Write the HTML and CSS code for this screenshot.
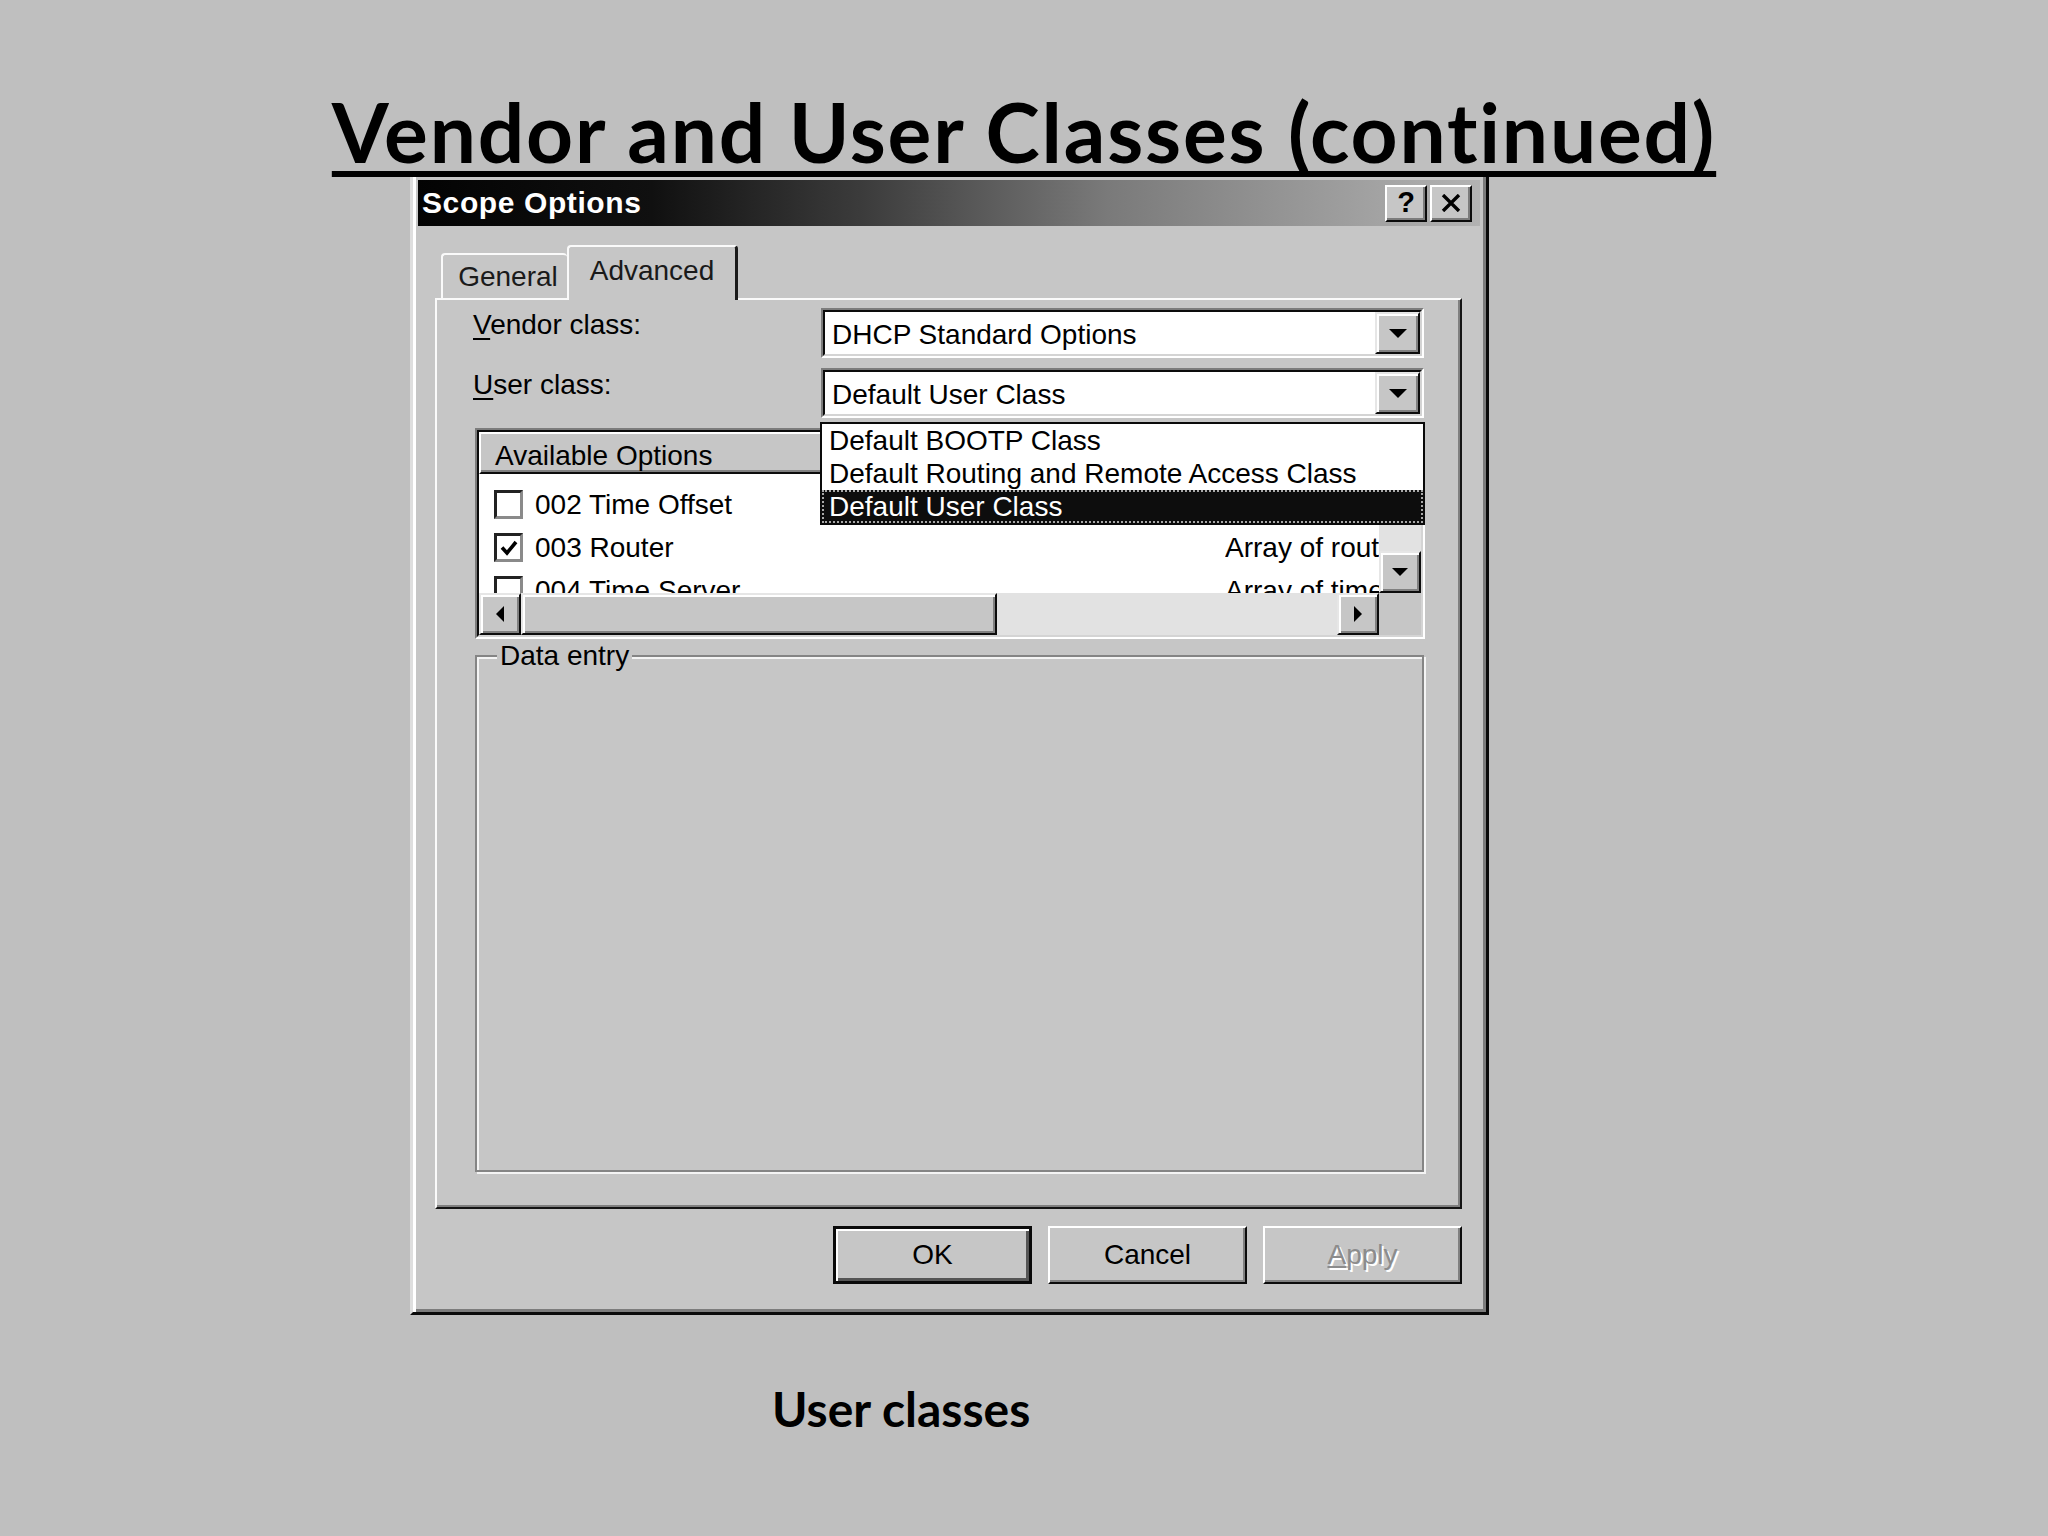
FILE: index.html
```html
<!DOCTYPE html>
<html lang="en">
<head>
<meta charset="utf-8">
<title>Vendor and User Classes (continued)</title>
<link rel="stylesheet" href="styles.css">
</head>
<body>
<div class="slide">
  <h1 class="title">Vendor and User Classes (continued)</h1>

  <div class="dialog">
    <div class="titlebar">
      <span class="tb-text">Scope Options</span>
      <div class="tb-btns">
        <span class="tb-btn tb-help">?</span>
        <span class="tb-btn">
          <svg width="20" height="18" viewBox="0 0 20 18"><path d="M2 1 L18 17 M18 1 L2 17" stroke="#000" stroke-width="3.4" fill="none"/></svg>
        </span>
      </div>
    </div>

    <div class="tabs">
      <div class="tab">General</div>
      <div class="tab active">Advanced</div>
    </div>

    <div class="panel">
      <div class="field-row">
        <label class="field-label"><u>V</u>endor class:</label>
        <div class="combo">
          <div class="combo-inner">
            <span class="combo-text">DHCP Standard Options</span>
            <span class="combo-btn">
              <svg width="18" height="9" viewBox="0 0 18 9"><path d="M0 0 H18 L9 9 Z" fill="#000"/></svg>
            </span>
          </div>
        </div>
      </div>

      <div class="field-row">
        <label class="field-label"><u>U</u>ser class:</label>
        <div class="combo">
          <div class="combo-inner">
            <span class="combo-text">Default User Class</span>
            <span class="combo-btn">
              <svg width="18" height="9" viewBox="0 0 18 9"><path d="M0 0 H18 L9 9 Z" fill="#000"/></svg>
            </span>
          </div>
          <ul class="dropdown">
            <li class="dd-item">Default BOOTP Class</li>
            <li class="dd-item">Default Routing and Remote Access Class</li>
            <li class="dd-item selected">Default User Class</li>
          </ul>
        </div>
      </div>

      <div class="listview">
        <div class="lv-inner">
          <div class="lv-content">
            <div class="lv-header">
              <div class="lv-hcell">Available Options</div>
            </div>
            <div class="lv-row">
              <div class="lv-c1"><span class="checkbox"></span>002 Time Offset</div>
              <div class="lv-c2"></div>
            </div>
            <div class="lv-row">
              <div class="lv-c1"><span class="checkbox">
                <svg width="20" height="20" viewBox="0 0 20 20"><path d="M3 9.5 L8 15 L17 4" stroke="#000" stroke-width="3.6" fill="none"/></svg>
              </span>003 Router</div>
              <div class="lv-c2">Array of router addresses</div>
            </div>
            <div class="lv-row">
              <div class="lv-c1"><span class="checkbox"></span>004 Time Server</div>
              <div class="lv-c2">Array of time server addresses</div>
            </div>
          </div>
          <div class="vscroll">
            <span class="sb-btn">
              <svg width="16" height="8" viewBox="0 0 16 8"><path d="M0 8 H16 L8 0 Z" fill="#000"/></svg>
            </span>
            <span class="sb-track"></span>
            <span class="sb-btn">
              <svg width="16" height="8" viewBox="0 0 16 8"><path d="M0 0 H16 L8 8 Z" fill="#000"/></svg>
            </span>
          </div>
          <div class="hscroll">
            <span class="sb-btn">
              <svg width="8" height="16" viewBox="0 0 8 16"><path d="M8 0 V16 L0 8 Z" fill="#000"/></svg>
            </span>
            <span class="sb-thumb"></span>
            <span class="sb-track"></span>
            <span class="sb-btn">
              <svg width="8" height="16" viewBox="0 0 8 16"><path d="M0 0 V16 L8 8 Z" fill="#000"/></svg>
            </span>
          </div>
          <div class="lv-corner"></div>
        </div>
      </div>

      <fieldset class="group">
        <legend class="group-label">Data entry</legend>
      </fieldset>
    </div>

    <div class="buttons">
      <button class="btn default">OK</button>
      <button class="btn">Cancel</button>
      <button class="btn disabled"><u>A</u>pply</button>
    </div>
  </div>

  <p class="caption">User classes</p>
</div>
</body>
</html>
```

FILE: styles.css
```css
* { box-sizing: border-box; }

html, body {
  margin: 0;
  padding: 0;
}

body {
  background: #bfbfbf;
}

.slide {
  width: 2048px;
  height: 1536px;
  overflow: hidden;
  background: #bfbfbf;
}

/* ---------- slide title ---------- */
.title {
  margin: 0;
  padding-top: 82px;
  height: 171px;
  font-family: "Lato", "Open Sans", sans-serif;
  font-weight: 700;
  font-size: 82px;
  letter-spacing: 1.8px;
  line-height: 98px;
  text-align: center;
  color: #000;
  white-space: nowrap;
  text-decoration: underline;
  text-decoration-thickness: 6px;
  text-underline-offset: 8px;
  text-decoration-skip-ink: none;
}

/* ---------- dialog ---------- */
.dialog {
  margin-left: 410px;
  width: 1079px;
  height: 1144px;
  background: #c6c6c6;
  border: 3px solid;
  border-color: #dedede #0a0a0a #0a0a0a #dedede;
  box-shadow: inset 3px 3px 0 #ffffff, inset -3px -3px 0 #7c7c7c;
  padding: 6px 6px 0 5px;
  font-family: "Liberation Sans", Arial, sans-serif;
  font-size: 28px;
  color: #000;
}

.titlebar {
  display: flex;
  align-items: center;
  height: 46px;
  padding: 0 8px 0 4px;
  background: linear-gradient(to right, #030303 0%, #101010 22%, #3c3c3c 42%, #7a7a7a 65%, #b2b2b2 100%);
}

.tb-text {
  color: #fff;
  font-weight: 700;
  font-size: 30px;
  letter-spacing: 0.6px;
}

.tb-btns {
  margin-left: auto;
  display: flex;
  gap: 3px;
}

.tb-btn {
  width: 42px;
  height: 37px;
  display: flex;
  align-items: center;
  justify-content: center;
  background: #c6c6c6;
  border: 2px solid;
  border-color: #ffffff #0a0a0a #0a0a0a #ffffff;
  box-shadow: inset -2px -2px 0 #7c7c7c;
}

.tb-help {
  font-weight: 700;
  font-size: 29px;
  line-height: 1;
  padding-bottom: 2px;
}

/* ---------- tabs ---------- */
.tabs {
  display: flex;
  align-items: flex-end;
  height: 53px;
  margin: 19px 18px 0 17px;
  padding-left: 6px;
}

.tab {
  display: flex;
  align-items: center;
  justify-content: center;
  height: 45px;
  width: 126px;
  padding-left: 6px;
  background: #c6c6c6;
  color: #1a1a1a;
  border-top: 2px solid #fafafa;
  border-left: 2px solid #fafafa;
  border-radius: 4px 4px 0 0;
}

.tab.active {
  position: relative;
  z-index: 1;
  width: 171px;
  height: 55px;
  margin-bottom: -2px;
  padding: 0 0 6px 0;
  border-right: 3px solid #1a1a1a;
}

/* ---------- panel ---------- */
.panel {
  height: 911px;
  margin: 0 18px 0 17px;
  padding: 8px 36px 0 36px;
  border: 2px solid;
  border-color: #fafafa #141414 #141414 #fafafa;
  box-shadow: inset -2px -2px 0 #808080;
}

.field-row {
  display: flex;
  align-items: flex-start;
  height: 50px;
  margin-bottom: 10px;
}

.field-label {
  width: 348px;
  line-height: 34px;
}

.field-label u { text-underline-offset: 4px; text-decoration-thickness: 2px; }

.combo {
  position: relative;
  width: 603px;
  height: 50px;
  border: 2px solid;
  border-color: #7c7c7c #ffffff #ffffff #7c7c7c;
}

.combo-inner {
  display: flex;
  align-items: center;
  height: 100%;
  background: #fff;
  border: 2px solid;
  border-color: #0c0c0c #d4d4d4 #d4d4d4 #0c0c0c;
}

.combo-text {
  flex: 1;
  padding: 3px 0 0 7px;
  white-space: nowrap;
}

.combo-btn {
  width: 45px;
  height: 100%;
  display: flex;
  align-items: center;
  justify-content: center;
  background: #c6c6c6;
  border: 2px solid;
  border-color: #e6e6e6 #0c0c0c #0c0c0c #e6e6e6;
  box-shadow: inset 2px 2px 0 #ffffff, inset -2px -2px 0 #808080;
}

/* dropdown list overlaying the panel */
.dropdown {
  position: absolute;
  top: 52px;
  left: -3px;
  z-index: 5;
  width: 605px;
  margin: 0;
  padding: 0;
  list-style: none;
  background: #fff;
  border: 2px solid #0a0a0a;
}

.dd-item {
  height: 33px;
  line-height: 33px;
  padding-left: 7px;
  white-space: nowrap;
}

.dd-item.selected {
  background: #0d0d0d;
  color: #fff;
  outline: 2px dotted #a8a8a8;
  outline-offset: -2px;
}

/* ---------- list view ---------- */
.listview {
  margin: 3px 0 0 2px;
  width: 950px;
  height: 211px;
  border: 2px solid;
  border-color: #7c7c7c #ffffff #ffffff #7c7c7c;
}

.lv-inner {
  height: 100%;
  display: grid;
  grid-template-columns: 1fr 42px;
  grid-template-rows: 1fr 42px;
  border: 2px solid;
  border-color: #0c0c0c #d4d4d4 #d4d4d4 #0c0c0c;
  background: #fff;
  overflow: hidden;
}

.lv-content {
  overflow: hidden;
  background: #fff;
}

.lv-header {
  display: flex;
  height: 42px;
  background: #c6c6c6;
}

.lv-hcell {
  width: 700px;
  height: 42px;
  padding: 3px 0 0 14px;
  line-height: 38px;
  border: 2px solid;
  border-color: #ffffff #0c0c0c #0c0c0c #ffffff;
  box-shadow: inset -2px -2px 0 #808080;
}

.lv-row {
  display: grid;
  grid-template-columns: 746px 1fr;
  height: 43px;
  align-items: center;
  white-space: nowrap;
}

.lv-header + .lv-row { margin-top: 9px; }

.lv-c1 {
  display: flex;
  align-items: center;
  padding-left: 15px;
  overflow: hidden;
}

.lv-c2 {
  overflow: hidden;
}

.checkbox {
  width: 29px;
  height: 29px;
  margin-right: 12px;
  display: flex;
  align-items: center;
  justify-content: center;
  background: #fff;
  border: 3px solid;
  border-color: #222 #8a8a8a #8a8a8a #222;
}

.vscroll {
  display: flex;
  flex-direction: column;
}

.hscroll {
  display: flex;
}

.sb-btn {
  flex: none;
  width: 42px;
  height: 42px;
  display: flex;
  align-items: center;
  justify-content: center;
  background: #c6c6c6;
  border: 2px solid;
  border-color: #e6e6e6 #0c0c0c #0c0c0c #e6e6e6;
  box-shadow: inset 2px 2px 0 #ffffff, inset -2px -2px 0 #808080;
}

.sb-track {
  flex: 1;
  background: #e2e2e2;
}

.sb-thumb {
  flex: none;
  width: 476px;
  background: #c6c6c6;
  border: 2px solid;
  border-color: #e6e6e6 #0c0c0c #0c0c0c #e6e6e6;
  box-shadow: inset 2px 2px 0 #ffffff, inset -2px -2px 0 #808080;
}

.lv-corner {
  background: #c6c6c6;
}

/* ---------- group box ---------- */
.group {
  margin: 0 0 0 2px;
  padding: 0;
  min-width: 0;
  width: 949px;
  height: 533px;
  border: 2px solid #858585;
  box-shadow: inset 2px 2px 0 #f4f4f4, 2px 2px 0 #f4f4f4;
}

.group-label {
  margin-left: 20px;
  padding: 0 3px;
  line-height: 34px;
  background: #c6c6c6;
}

/* ---------- buttons ---------- */
.buttons {
  display: flex;
  justify-content: flex-end;
  gap: 16px;
  margin: 17px 18px 0 0;
}

.btn {
  width: 199px;
  height: 58px;
  padding: 0;
  font-family: "Liberation Sans", Arial, sans-serif;
  font-size: 28px;
  color: #000;
  background: #c6c6c6;
  border: 2px solid;
  border-color: #ffffff #0c0c0c #0c0c0c #ffffff;
  box-shadow: inset -2px -2px 0 #808080;
}

.btn.default {
  border: 3px solid #0a0a0a;
  box-shadow: inset 2px 2px 0 #ffffff, inset -3px -3px 0 #555555;
}

.btn.disabled {
  color: #8c8c8c;
  text-shadow: 2px 2px 0 #ffffff;
}

/* ---------- caption ---------- */
.caption {
  margin: 65px 0 0 772px;
  font-family: "Lato", "Open Sans", sans-serif;
  font-weight: 700;
  font-size: 48px;
  line-height: 1.2;
  color: #000;
}
```
